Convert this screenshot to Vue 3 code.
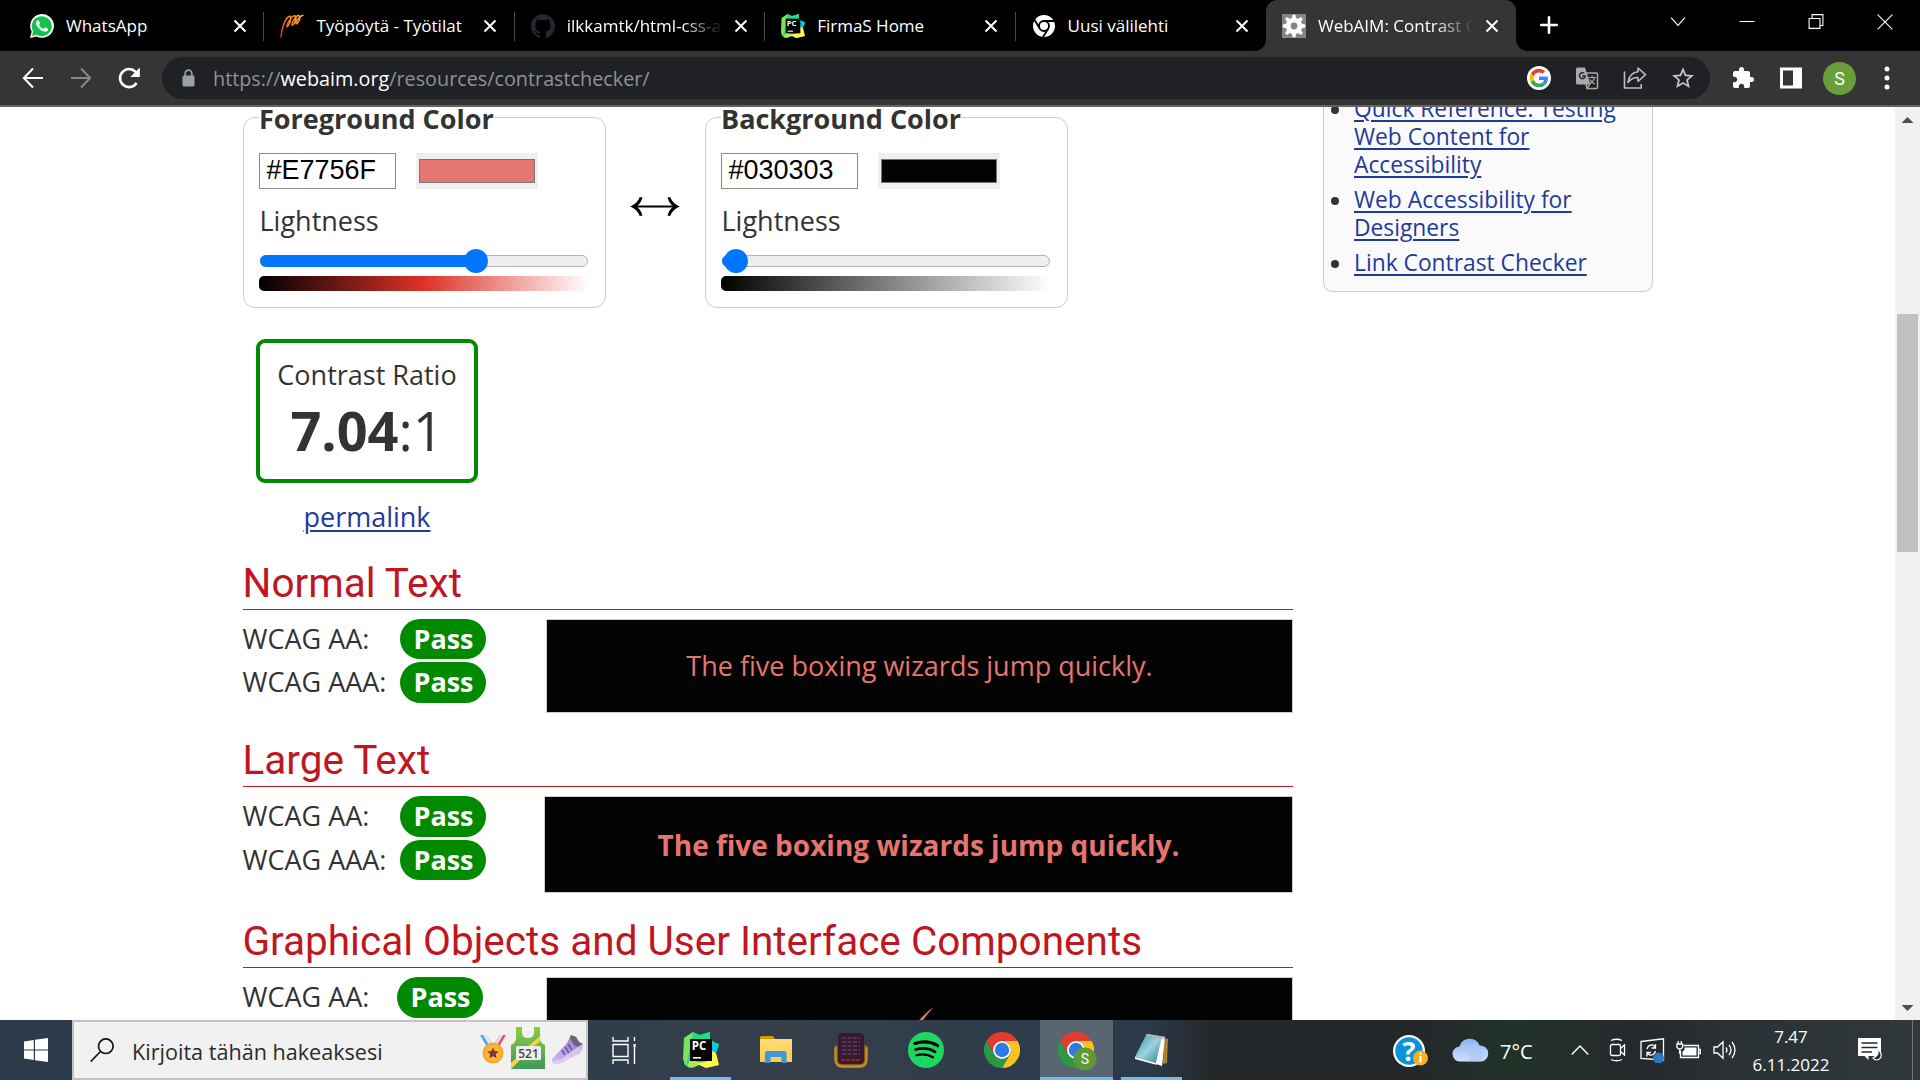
<script setup>
const tabs = [
  { icon: 'whatsapp', title: 'WhatsApp' },
  { icon: 'swirl', title: 'Työpöytä - Työtilat' },
  { icon: 'github', title: 'ilkkamtk/html-css-a', fade: true },
  { icon: 'pc', title: 'FirmaS Home' },
  { icon: 'mono', title: 'Uusi välilehti' },
  { icon: 'gear', title: 'WebAIM: Contrast C', active: true, fade: true },
]
const panels = [
  { name: 'Foreground Color', hex: '#E7756F', color: '#e7756f', pos: 216, mid: '#de3228' },
  { name: 'Background Color', hex: '#030303', color: '#030303', pos: 14, mid: '#808080' },
]
const links = ['Quick Reference: Testing Web Content for Accessibility', 'Web Accessibility for Designers', 'Link Contrast Checker']
</script>

<template>
  <div class="screen">
    <svg class="defs" width="0" height="0">
      <defs>
        <linearGradient id="cloudg" x1="0" y1="0" x2="0" y2="1"><stop offset="0" stop-color="#8fb4f2" /><stop offset="1" stop-color="#cfdffb" /></linearGradient>
        <linearGradient id="noteg" x1="0" y1="0" x2="1" y2="1"><stop offset="0" stop-color="#2f8ea6" /><stop offset=".5" stop-color="#9fd3df" /><stop offset="1" stop-color="#2c7f98" /></linearGradient>
        <linearGradient id="swirlg" x1="0" y1="1" x2="1" y2="0"><stop offset="0" stop-color="#e5322d" /><stop offset=".5" stop-color="#f07a24" /><stop offset="1" stop-color="#f9b233" /></linearGradient>
        <linearGradient id="foldg" x1="0" y1="0" x2="0" y2="1"><stop offset="0" stop-color="#ffdc79" /><stop offset="1" stop-color="#fbcb50" /></linearGradient>
        <linearGradient id="shirtg" x1="0" y1="0" x2="0" y2="1"><stop offset="0" stop-color="#8ccb45" /><stop offset="1" stop-color="#3f9a5c" /></linearGradient>
        <linearGradient id="shoeg" x1="1" y1="0" x2="0" y2="1"><stop offset="0" stop-color="#8f74c9" /><stop offset="1" stop-color="#d3bdf0" /></linearGradient>
        <symbol id="pc" viewBox="0 0 36 36">
          <path d="M1 6 10 0l7 3 10-3v7l4 3 5 2-4 9 3 12-12 3-8-4-9 4-5-4z" fill="#21d789" />
          <path d="M1 6 10 0 7 16 3 34 0 27z" fill="#7be35a" /><path d="M7 28 4 34 9 36l12-5z" fill="#a8ea55" />
          <path d="M28 10l8 4-3 7-4 3z" fill="#07c3f2" /><path d="M29 19l4 2 3 12-13 3-9-4 14-4z" fill="#fcf84a" />
          <path d="M17 3 27 0v7l-13 1z" fill="#19e08f" />
          <rect x="7" y="7" width="22" height="22" fill="#000" /><rect x="10" y="25" width="8" height="1.6" fill="#fff" />
          <text x="8.7" y="17.5" font-family="Open Sans, sans-serif" font-weight="700" font-size="11.5" fill="#fff">PC</text>
        </symbol>
        <symbol id="chrome" viewBox="0 0 48 48">
          <path d="M24 12h20.8A24 24 0 0 0 3.2 12l10.4 18A12 12 0 0 1 24 12z" fill="#e33b2e" />
          <path d="M44.8 12H24a12 12 0 0 1 10.4 18L24 48A24 24 0 0 0 44.8 12z" fill="#fcc31e" />
          <path d="M34.4 30a12 12 0 0 1-20.8 0L3.2 12A24 24 0 0 0 24 48z" fill="#2b9846" />
          <circle cx="24" cy="24" r="12" fill="#fff" /><circle cx="24" cy="24" r="9.6" fill="#3079ea" />
        </symbol>
      </defs>
    </svg>

    <header class="tabs">
      <div v-for="t in tabs" :key="t.title" class="tab" :class="{ active: t.active }">
        <svg v-if="t.icon === 'whatsapp'" class="fav" viewBox="0 0 24 24">
          <path d="M0 24 1.7 17.8A11.9 11.9 0 1 1 6.4 22.4z" fill="#fff" />
          <path d="M1.9 22.1 3.2 17.4A10 10 0 1 1 6.7 20.85z" fill="#12c24c" />
          <path fill="#fff" d="M17.472 14.382c-.297-.149-1.758-.867-2.03-.967-.273-.099-.471-.148-.67.15-.197.297-.767.966-.94 1.164-.173.199-.347.223-.644.075-.297-.15-1.255-.463-2.390-1.475-.883-.788-1.480-1.761-1.653-2.059-.173-.297-.018-.458.130-.606.134-.133.298-.347.446-.520.149-.174.198-.298.298-.497.099-.198.050-.371-.025-.520-.075-.149-.669-1.612-.916-2.207-.242-.579-.487-.500-.669-.510-.173-.008-.371-.010-.570-.010-.198 0-.520.074-.792.372-.272.297-1.040 1.016-1.040 2.479 0 1.462 1.065 2.875 1.213 3.074.149.198 2.096 3.200 5.077 4.487.709.306 1.262.489 1.694.625.712.227 1.360.195 1.871.118.571-.085 1.758-.719 2.006-1.413.248-.694.248-1.289.173-1.413-.074-.124-.272-.198-.570-.347z" />
        </svg>
        <svg v-else-if="t.icon === 'swirl'" class="fav" viewBox="0 0 24 24" fill="none" stroke="url(#swirlg)" stroke-width="1.5" stroke-linecap="round" stroke-linejoin="round">
          <path d="M1 23C1.500 15 5 4 9.500 2.300c3-.8.500 9-2.500 10.500C6 12 11 2 14.500 1.800c3.500 0 0 9-2.300 9.400C11 10 16 1.500 18.500 1.600c3.500.4-.2 8-2.300 8.200C15 9 19 2 23 1.200" />
        </svg>
        <svg v-else-if="t.icon === 'github'" class="fav" viewBox="0 0 24 24">
          <path fill="#24292f" d="M12 .297c-6.630 0-12 5.373-12 12 0 5.303 3.438 9.800 8.205 11.385.6.113.820-.258.820-.577 0-.285-.010-1.040-.015-2.040-3.338.724-4.042-1.610-4.042-1.610C4.422 18.070 3.633 17.700 3.633 17.700c-1.087-.744.084-.729.084-.729 1.205.084 1.838 1.236 1.838 1.236 1.070 1.835 2.809 1.305 3.495.998.108-.776.417-1.305.760-1.605-2.665-.300-5.466-1.332-5.466-5.930 0-1.310.465-2.380 1.235-3.220-.135-.303-.540-1.523.105-3.176 0 0 1.005-.322 3.300 1.230.960-.267 1.980-.399 3-.405 1.020.006 2.040.138 3 .405 2.280-1.552 3.285-1.230 3.285-1.230.645 1.653.240 2.873.120 3.176.765.840 1.230 1.910 1.230 3.220 0 4.610-2.805 5.625-5.475 5.920.420.360.810 1.096.810 2.220 0 1.606-.015 2.896-.015 3.286 0 .315.210.690.825.570C20.565 22.092 24 17.592 24 12.297c0-6.627-5.373-12-12-12" />
        </svg>
        <svg v-else-if="t.icon === 'pc'" class="fav"><use href="#pc" /></svg>
        <svg v-else-if="t.icon === 'mono'" class="fav" viewBox="0 0 24 24">
          <circle cx="12" cy="12" r="11" fill="#fff" /><circle cx="12" cy="12" r="5" fill="none" stroke="#000" stroke-width="1.8" />
          <path d="M12 7h10.500M7.700 14.500 2.300 5.500M16.300 14.500 11 23" stroke="#000" stroke-width="1.8" />
        </svg>
        <svg v-else class="fav" viewBox="0 0 24 24">
          <rect width="24" height="24" fill="#858585" />
          <g fill="#fff"><circle cx="12" cy="12" r="8.3" />
            <path v-for="a in 8" :key="a" d="M9.800 5 10.600.8h2.800L14.200 5z" :transform="`rotate(${a * 45} 12 12)`" /></g>
          <circle cx="12" cy="12" r="3.4" fill="#858585" />
        </svg>
        <span class="title" :class="{ fade: t.fade }">{{ t.title }}</span>
        <svg class="x" viewBox="0 0 14 14" stroke="#fff" stroke-width="2"><path d="M1.500 1.500l11 11M12.500 1.500l-11 11" /></svg>
      </div>
      <svg class="plus" viewBox="0 0 18 18" stroke="#fff" stroke-width="2.6" stroke-linecap="round"><path d="M9 1.300v15.400M1.300 9h15.400" /></svg>
      <div class="winctl">
        <svg viewBox="0 0 70 44"><path d="M27.500 17.500l7 8 7-8" /></svg>
        <svg viewBox="0 0 70 44"><path d="M27 21.500h15" /></svg>
        <svg viewBox="0 0 70 44"><path d="M27.500 18.500h11v10h-11zM30.500 18v-3.500h11v11h-3" /></svg>
        <svg viewBox="0 0 70 44"><path d="M27 14.500l15 15M42 14.500l-15 15" /></svg>
      </div>
    </header>

    <div class="toolbar">
      <svg class="t24" viewBox="0 0 24 24" stroke="#fff" stroke-width="2" fill="none"><path d="M22 12H3.500M12 2.500 2.800 12l9.200 9.500" /></svg>
      <svg class="t24" viewBox="0 0 24 24" stroke="#888" stroke-width="2" fill="none"><path d="M2 12h18.500M12 2.500l9.200 9.500-9.200 9.500" /></svg>
      <svg class="t24" viewBox="0 0 24 24"><path d="M19.600 17a9 9 0 1 1 .2-9.500" stroke="#fff" stroke-width="2.6" fill="none" /><path d="M22.800 1.500V11h-9.500z" fill="#fff" /></svg>
      <div class="omni">
        <svg class="lock" viewBox="0 0 14 18"><rect x="1" y="6.500" width="12" height="11" rx="1.5" fill="#9aa0a6" /><path d="M3.700 7V4.500a3.300 3.300 0 0 1 6.600 0V7" stroke="#9aa0a6" stroke-width="1.7" fill="none" /></svg>
        <span class="url">https://<b>webaim.org</b>/resources/contrastchecker/</span>
        <svg class="o24" viewBox="0 0 24 24"><circle cx="12" cy="12" r="12" fill="#fff" />
          <g transform="translate(2.700 2.700) scale(.387)"><path fill="#EA4335" d="M24 9.500c3.540 0 6.710 1.220 9.210 3.600l6.850-6.850C35.900 2.380 30.470 0 24 0 14.620 0 6.510 5.380 2.560 13.220l7.980 6.190C12.430 13.720 17.740 9.500 24 9.500z" /><path fill="#4285F4" d="M46.980 24.550c0-1.570-.150-3.090-.380-4.550H24v9.020h12.940c-.580 2.960-2.260 5.480-4.780 7.180l7.730 6c4.510-4.180 7.090-10.360 7.090-17.650z" /><path fill="#FBBC05" d="M10.530 28.590c-.480-1.450-.760-2.990-.760-4.590s.270-3.140.760-4.590l-7.980-6.190C.920 16.460 0 20.120 0 24c0 3.880.920 7.540 2.560 10.780l7.970-6.190z" /><path fill="#34A853" d="M24 48c6.480 0 11.930-2.130 15.890-5.810l-7.730-6c-2.150 1.450-4.920 2.300-8.160 2.300-6.260 0-11.570-4.220-13.470-9.910l-7.980 6.190C6.510 42.620 14.620 48 24 48z" /></g>
        </svg>
        <svg class="o24" viewBox="0 0 24 24"><path d="M9 7h12q1.500 0 1.500 1.500v13q0 1-1.200 1H12z" fill="none" stroke="#aaa" stroke-width="1.5" /><path d="M2.500 1.500h7.500l5.500 17H2.500q-1.500 0-1.500-1.500V3q0-1.500 1.500-1.500z" fill="#aaa" /><path d="M10.500 10H7.300M10.400 10A3 3 0 1 1 9.300 7.300" stroke="#202124" stroke-width="1.4" fill="none" /><path d="M13.500 11.500h7.500M17.200 9.800v1.700M19.500 11.500c-.5 2.500-2.500 5-4.500 6.200M15 13.500c1 2 3 3.800 5 4.500M12 22l3-3.500" stroke="#aaa" stroke-width="1.2" fill="none" /></svg>
        <svg class="o24" viewBox="0 0 24 24" fill="none" stroke="#bbb" stroke-width="1.6"><path d="M1.500 5.500V22h16.700v-4" /><path d="M15 2l7.500 6.700L15 15.500v-4c-4.500 0-7.500 1.500-10 5C5.800 10.500 9 6.500 15 5.800z" stroke-linejoin="round" /></svg>
        <svg class="o24" viewBox="0 0 24 24"><path fill="#c4c4c4" transform="translate(-1.200 -1) scale(1.100)" d="M22 9.240l-7.190-.62L12 2 9.190 8.630 2 9.240l5.460 4.730L5.820 21 12 17.270 18.180 21l-1.630-7.030L22 9.240zM12 15.400l-3.760 2.270 1-4.280-3.320-2.880 4.380-.38L12 6.100l1.710 4.040 4.380.38-3.320 2.880 1 4.280L12 15.400z" /></svg>
      </div>
      <svg class="t24" viewBox="0 0 24 24"><path fill="#fff" d="M20.500 11H19V7c0-1.100-.9-2-2-2h-4V3.500a2.500 2.500 0 0 0-5 0V5H4c-1.100 0-1.990.9-1.990 2v3.800H3.500c1.490 0 2.700 1.210 2.700 2.700s-1.210 2.700-2.700 2.700H2V20c0 1.100.9 2 2 2h3.800v-1.500c0-1.490 1.210-2.700 2.700-2.700s2.700 1.210 2.700 2.700V22H17c1.100 0 2-.9 2-2v-4h1.500a2.500 2.500 0 0 0 0-5z" /></svg>
      <svg class="t24" viewBox="0 0 24 24"><path fill="#fff" fill-rule="evenodd" d="M1 1.500h22v21H1zM4 4.500v15h10v-15z" /></svg>
      <div class="avatar">S</div>
      <svg class="t24" viewBox="0 0 24 24" fill="#fff"><circle cx="12" cy="3" r="2.5" /><circle cx="12" cy="12" r="2.5" /><circle cx="12" cy="21" r="2.5" /></svg>
    </div>

    <div class="page">
      <main class="main">
        <div class="pickers">
          <template v-for="(p, i) in panels" :key="p.name">
            <svg v-if="i" class="swap" viewBox="0 0 50 20"><path d="M4 9.500h42" stroke="#000" stroke-width="2" /><path d="M0 9.500C5 7.500 8.500 4 9.500.300h2.900C11.800 4 9.500 7.500 6.500 9.500c3 2 5.300 5.500 5.900 9.200H9.500C8.500 15 5 11.500 0 9.500zM50 9.500C45 7.500 41.500 4 40.500.300h-2.900c.6 3.700 2.900 7.200 5.900 9.200-3 2-5.300 5.500-5.900 9.200h2.900C41.500 15 45 11.500 50 9.500z" /></svg>
            <section class="panel">
              <h3 class="legend">{{ p.name }}</h3>
              <div class="fields">
                <div class="hex">{{ p.hex }}</div>
                <div class="well"><div class="swatch" :style="{ background: p.color }"></div></div>
              </div>
              <div class="light">Lightness</div>
              <div class="track">
                <div class="fill" :style="{ width: p.pos + 'px' }"></div>
                <div class="thumb" :style="{ left: p.pos - 13 + 'px' }"></div>
              </div>
              <div class="ramp" :style="{ background: `linear-gradient(90deg,#000,${p.mid},#fff)` }"></div>
            </section>
          </template>
        </div>
        <div class="ratio">
          <div class="rl">Contrast Ratio</div>
          <div class="rv"><b>7.04</b>:1</div>
        </div>
        <div class="perm"><a>permalink</a></div>

        <section class="sec s1">
          <h2>Normal Text</h2>
          <div class="row">
            <div class="levels">
              <div class="lv"><span>WCAG AA:</span><b>Pass</b></div>
              <div class="lv"><span>WCAG AAA:</span><b>Pass</b></div>
            </div>
            <div class="sample n">The five boxing wizards jump quickly.</div>
          </div>
        </section>
        <section class="sec s2">
          <h2>Large Text</h2>
          <div class="row">
            <div class="levels">
              <div class="lv"><span>WCAG AA:</span><b>Pass</b></div>
              <div class="lv"><span>WCAG AAA:</span><b>Pass</b></div>
            </div>
            <div class="sample l">The five boxing wizards jump quickly.</div>
          </div>
        </section>
        <section class="sec s3">
          <h2>Graphical Objects and User Interface Components</h2>
          <div class="row">
            <div class="levels"><div class="lv"><span>WCAG AA:</span><b>Pass</b></div></div>
            <div class="sample g"><svg viewBox="0 0 40 40"><path d="M21.500.5Q12 6 -2 24l4 3Q12 10 21.500.500z" fill="#e7756f" /></svg></div>
          </div>
        </section>
      </main>
      <aside class="side">
        <ul><li v-for="l in links" :key="l"><a>{{ l }}</a></li></ul>
      </aside>
      <div class="scroll">
        <svg viewBox="0 0 25 25"><path d="M6.500 16 12.500 10l6 6z" fill="#505050" /></svg>
        <div class="grip"></div>
        <svg viewBox="0 0 25 25"><path d="M6.500 10l6 6 6-6z" fill="#505050" /></svg>
      </div>
    </div>

    <footer class="task">
      <div class="start"><svg viewBox="0 0 24 24" fill="#fff"><path d="M0 3.400 9.800 2v9.500H0zM11 1.800 24 0v11.500H11zM0 12.500h9.800V22L0 20.600zM11 12.500h13V24l-13-1.800z" /></svg></div>
      <div class="search">
        <svg class="mag" viewBox="0 0 24 24" fill="none" stroke="#111" stroke-width="1.7"><circle cx="15.800" cy="8.200" r="7.300" /><path d="M10.500 13.500.7 23.500" /></svg>
        <span class="ph">Kirjoita tähän hakeaksesi</span>
        <svg class="doodle" viewBox="0 0 104 44">
          <path d="M0 0h6l7 11-4 4z" fill="#4aa3e8" /><path d="M3 0h3l6 10-2 2z" fill="#dceafc" /><path d="M26 0h-6l-7 11 4 4z" fill="#e44a7b" /><path d="M23 0h-3l-6 10 2 2z" fill="#fbdbe6" />
          <g transform="translate(0 0)"><circle cx="13" cy="18" r="10.500" fill="#f9a825" /><circle cx="13" cy="18" r="8" fill="#fbb63f" /><path d="M13 12.500l1.700 3.600 4 .5-2.900 2.700.8 3.900-3.600-1.900-3.600 1.900.8-3.900-2.900-2.700 4-.5z" fill="#7a3b2e" /></g>
          <g transform="translate(31 -8)"><path d="M5 0h6v5q0 6 6 6t6-6V0h6v11q0 5 5 7v24H0V18q5-2 5-7z" fill="url(#shirtg)" /><path d="M29 9v6l-11 7h-4zM9 33 0 42v-6l4-4z" fill="#f5d63a" /><rect x="5" y="19" width="25" height="14" rx="1.5" fill="#eee" /><text x="17.500" y="30.500" font-family="Open Sans, sans-serif" font-size="12" font-weight="600" fill="#444" text-anchor="middle">521</text></g>
          <path d="M72 24 87 8l4-8 5 2 3 5 4 2q0 5-3 9L83 27q-5 3-10 2z" fill="url(#shoeg)" />
          <path d="M91 0l5 2 3 5 4 2-3 4-6-3-4-7z" fill="#6a6378" />
          <path d="M74 26l7-2L102 9l1 1q0 5-3 9L83 27q-5 3-10 2z" fill="#e3d6f7" opacity=".75" />
          <path d="M88 9l4 6M85 12l4 6M82 15l3 5" stroke="#6f55a5" stroke-width="1.6" />
        </svg>
      </div>
      <div class="apps">
        <div class="app tv"><svg width="24" height="29" viewBox="0 0 24 29" fill="none" stroke="#fff" stroke-width="1.4"><path d="M1 1v4h15V1M1 28v-4h15v4M1 8.500h15v12H1zM22.500 1v4M22.500 11v17" /><rect x="21.500" y="8" width="2.2" height="3" fill="#fff" stroke="none" /></svg></div>
        <div class="app run"><svg width="36" height="36"><use href="#pc" /></svg></div>
        <div class="app"><svg width="32" height="28" viewBox="0 0 32 28"><path d="M0 1.500Q0 0 1.500 0H13l2 3v3H0z" fill="#d99a00" /><rect y="3" width="32" height="23" rx=".8" fill="url(#foldg)" /><path d="M5 27V17.500Q5 15 7.500 15h16.500q2.500 0 2.500 2.500V27h-5v-6H10.500v6z" fill="#3f96dc" /></svg></div>
        <div class="app"><svg width="34" height="36" viewBox="0 0 34 36"><path d="M1 13h32v15q0 8-8 8H9q-8 0-8-8z" fill="#80561f" /><path d="M1.500 15v12q0 7.500 8 7.500h15q8 0 8-7.500V15" fill="none" stroke="#c88d22" stroke-width="2.5" /><rect x="4" y="1" width="26" height="31" rx="4" fill="#36182f" /><path d="M8 6h18M8 10h18M8 14h18M8 18h18M8 22h18" stroke="#5c4068" stroke-width="1.5" stroke-dasharray="4 1.500" /><path d="M7 28h19" stroke="#8e2229" stroke-width="2" stroke-dasharray="4 1" /></svg></div>
        <div class="app"><svg width="36" height="36" viewBox="0 0 24 24"><circle cx="12" cy="12" r="12" fill="#1ed760" /><path fill="none" stroke="#000" stroke-linecap="round" stroke-width="2.1" d="M4.600 7.600c5-1.500 11-1 15.200 1.500" /><path fill="none" stroke="#000" stroke-linecap="round" stroke-width="1.8" d="M5.100 11.700c4.500-1.300 9.300-.8 13 1.500" /><path fill="none" stroke="#000" stroke-linecap="round" stroke-width="1.5" d="M5.700 15.500c3.800-1 7.700-.6 11 1.300" /></svg></div>
        <div class="app"><svg width="36" height="36"><use href="#chrome" /></svg></div>
        <div class="app on"><svg width="40" height="40" viewBox="0 0 40 40"><use href="#chrome" x="1" y="2" width="36" height="36" /><circle cx="28" cy="29" r="11.5" fill="#5d9a33" /><text x="28" y="34" text-anchor="middle" font-family="Roboto, sans-serif" font-size="14" fill="#fff">S</text></svg></div>
        <div class="app run"><svg width="34" height="34" viewBox="0 0 34 34"><path d="M29 5l4 1-1 24-4 1z" fill="#b0812d" /><path d="M12 1 30 4 27 33 21 31z" fill="#e6eef1" /><path d="M11 2 27 4 21 30 0 24z" fill="url(#noteg)" /><path d="M0 24 21 30l1 2L0 26zM21 30 27 4l2 .5L27 33z" fill="#fff" /><path d="M11 2.500 30 5" stroke="#aaa" stroke-width="3" stroke-dasharray="1.500 1" /></svg></div>
      </div>
      <div class="tray">
        <svg class="help" viewBox="0 0 36 34"><circle cx="16" cy="16" r="16" fill="#fff" /><circle cx="16" cy="16" r="13.700" fill="#0a93d8" /><text x="16" y="26" text-anchor="middle" font-family="Open Sans, sans-serif" font-weight="700" font-size="27" fill="#fff">?</text><circle cx="27.500" cy="23" r="7.500" fill="#f5b01e" /><path d="M27.500 21v6.500M27.500 17.800v2" stroke="#fff" stroke-width="2" /></svg>
        <svg class="cloud" viewBox="0 0 36 24"><path d="M8 23.500a7.500 7.500 0 0 1-1-15A10.500 10.500 0 0 1 27 7.500a8 8 0 0 1 1.500 16z" fill="url(#cloudg)" /><path d="M14 12q5-5 11-1a8 8 0 0 1 3.500 12.500H12Q22 20 14 12z" fill="#a9c4f5" opacity=".6" /></svg>
        <span class="deg">7°C</span>
        <svg class="chev" viewBox="0 0 18 12" fill="none" stroke="#fff" stroke-width="1.5"><path d="M.7 10.500 9 2l8.300 8.500" /></svg>
        <svg class="cam" viewBox="0 0 17 24" fill="none" stroke="#fff" stroke-width="1.3"><rect x="1.500" y="6.500" width="10" height="11" rx="1.5" /><path d="M11.500 10.500 15.500 7v10l-4-3.500M2 2.500q5.500-2.500 11 0M2 21.500q5.500 2.500 11 0" /></svg>
        <svg class="sync" viewBox="0 0 25 25" fill="none" stroke="#fff" stroke-width="1.3"><path d="M1 3.500 23.500.8V22L1 20.500z" /><path d="M7 11q1.500-4.500 6-4l2.500 2.500M15.500 6v4h-4M15.500 13q-1.500 4.500-6 4L7 14.500M7 18.500v-4h4" /><circle cx="18.500" cy="20" r="5.500" fill="#2d78c4" stroke="none" /></svg>
        <svg class="bat" viewBox="0 0 25 18" fill="none" stroke="#fff" stroke-width="1.3"><path d="M7.500 4.500h15v12H4.500V9.500M23 8.500h1.300v4H23M1 3h5.500v3.500q-2.700 3-5.500 0zM2.200 0v3M5.300 0v3M3.700 8v5" /><path d="M8.500 6.500h12v8h-14v-4q2.500-1 2-4z" fill="#fff" stroke="none" /></svg>
        <svg class="vol" viewBox="0 0 24 20" fill="none" stroke="#fff" stroke-width="1.3"><path d="M1 7h3.500L10 1.800v16.400L4.500 13H1zM13 7.500q1.800 2.500 0 5M16 4.800q4 5.200 0 10.400M19 2q6 8 0 16" /></svg>
        <div class="clock"><span>7.47</span><span>6.11.2022</span></div>
        <svg class="note" viewBox="0 0 26 26"><path d="M1 1h23v18H11.500v4L7.500 19H1z" fill="#fff" /><path d="M4.500 6h16M4.500 10.500h16M4.500 15H15" stroke="#25292c" stroke-width="1.3" /><path d="M20 12.500q3.500 5-4 8.500 2 3 5.500 1.500 3.500-2 2.500-6-.9-3-4-4z" fill="#25292c" stroke="#fff" stroke-width="1.2" /></svg>
        <div class="peek"></div>
      </div>
    </footer>
  </div>
</template>

<style>
html, body { margin: 0; background: #fff; overflow: hidden; }
</style>
<style scoped>
.screen { width: 1920px; height: 1080px; display: flex; flex-direction: column; overflow: hidden; font-family: "Open Sans", sans-serif; color: #333; background: #fff; }
.screen * { box-sizing: border-box; }
.defs { position: absolute; }
svg { display: block; flex: none; }
h2, h3, ul { margin: 0; padding: 0; }
.tabs { height: 51px; flex: none; background: #000; display: flex; padding-left: 14px; }
.tab { width: 250.400px; height: 51px; flex: none; display: flex; align-items: center; padding: 1px 17px 0 16px; position: relative; }
.tab:nth-child(-n+4)::after { content: ""; position: absolute; right: 0; top: 12px; width: 1px; height: 29px; background: #4a4a4a; }
.tab.active { background: #353535; border-radius: 11px 11px 0 0; }
.tab.active::before, .tab.active::after { content: ""; position: absolute; bottom: 0; width: 11px; height: 11px; background: radial-gradient(circle at 0 0, transparent 10.500px, #353535 11px); }
.tab.active::before { left: -11px; }
.tab.active::after { right: -11px; background: radial-gradient(circle at 100% 0, transparent 10.500px, #353535 11px); }
.fav { width: 24px; height: 24px; }
.title { margin-left: 12px; width: 160px; height: 26px; line-height: 25px; font-size: 17px; color: #fff; white-space: nowrap; flex: none; }
.title.fade { -webkit-mask-image: linear-gradient(90deg, #000 115px, transparent 156px); mask-image: linear-gradient(90deg, #000 115px, transparent 156px); }
.x { width: 14px; height: 14px; margin-left: 7px; }
.plus { width: 18px; height: 18px; margin: 16px 0 0 24px; }
.winctl { display: flex; margin-left: auto; fill: none; stroke: #fff; stroke-width: 1.100; }
.winctl svg { width: 69px; height: 44px; }
.toolbar { height: 56px; flex: none; background: #353535; border-bottom: 2px solid #636363; display: flex; align-items: center; padding-left: 21px; }
.t24 { width: 24px; height: 24px; margin-right: 24px; }
.omni { width: 1548px; height: 42px; border-radius: 21px; background: #202124; margin: 0 21px 0 -3px; display: flex; align-items: center; flex: none; padding-left: 19px; }
.lock { width: 15px; height: 18px; }
.url { margin-left: 17px; width: 1314px; flex: none; font-size: 19.800px; line-height: 30px; padding-top: 1px; color: #8f9296; white-space: nowrap; }
.url b { font-weight: 400; color: #fff; }
.o24 { width: 24px; height: 24px; margin-right: 24px; }
.avatar { width: 33px; height: 33px; border-radius: 50%; background: #689f38; color: #fff; font: 18px/33px Roboto, sans-serif; text-align: center; margin: 0 19px 0 -4px; flex: none; }
.page { height: 913px; flex: none; display: flex; overflow: hidden; padding-left: 243px; }
.main { width: 1050px; height: 913px; flex: none; font-size: 27px; line-height: 37px; }
.pickers { display: flex; padding-top: 10px; }
.panel { width: 363px; height: 191px; flex: none; border: 1px solid #ccc; border-radius: 12px; padding: 0 15px; }
.legend { width: max-content; margin-top: -18px; background: #fff; font-size: 27px; line-height: 37px; font-weight: 700; }
.fields { display: flex; gap: 20px; margin-top: 16px; }
.hex { width: 137px; height: 36px; border: 1px solid #8b8b8b; padding-left: 6.500px; font: 27px/33px "Liberation Sans", Arial, sans-serif; color: #000; }
.well { width: 122px; height: 36px; background: #efefef; padding: 6px 3px; }
.swatch { width: 116px; height: 24px; border: 1px solid #777; }
.light { margin: 13px 0 0 .500px; }
.track { position: relative; width: 328px; height: 12px; margin: 16px 0 0 1px; border: 1px solid #b2b2b2; border-radius: 6px; background: #efefef; }
.fill { height: 12px; margin: -1px 0 0 -1px; background: #0075ff; border-radius: 6px; }
.thumb { position: absolute; top: -7px; width: 24px; height: 24px; border-radius: 50%; background: #0075ff; }
.ramp { width: 330px; height: 15px; margin-top: 9px; border-radius: 5px; }
.swap { width: 50px; height: 20px; margin: 80px 25px 0 24px; }
.ratio { width: 222px; height: 144px; margin: 31px 0 0 13px; border: 4px solid #008a00; border-radius: 9px; padding-top: 13px; text-align: center; }
.rv { font-size: 54px; line-height: 74px; }
.rv b { font-weight: 700; }
.perm { width: 222px; margin: 15px 0 0 13px; text-align: center; }
a { color: #1e3b9c; text-decoration: underline; text-decoration-thickness: 2px; text-underline-offset: 3px; }
.s1 { margin-top: 24px; height: 177px; }
.s2 { height: 181px; }
h2 { font: 400 40.500px/48px Roboto, sans-serif; color: #bf1722; height: 51px; border-bottom: 1px solid #bf1722; white-space: nowrap; text-indent: -.500px; }
.row { display: flex; justify-content: space-between; margin-top: 9px; }
.lv { display: flex; width: 243px; height: 43px; align-items: flex-start; }
.s2 .lv { height: 44px; }
.lv span { width: 157px; line-height: 39px; white-space: nowrap; text-indent: -.500px; }
.s3 .lv span { width: 154px; }
.lv b { width: 86px; height: 41px; border-radius: 20.500px; background: #008a00; color: #fff; line-height: 39px; text-align: center; font-weight: 700; padding-left: 1px; }
.s1 .lv:first-child b, .s2 .lv:last-child b { height: 40px; }
.sample { border: 1px solid #ccc; background: #030303; color: #e7756f; text-align: center; }
.n { width: 747px; height: 94px; line-height: 92px; }
.l { width: 749px; height: 97px; line-height: 96px; font-size: 28px; font-weight: 700; }
.g { width: 747px; height: 94px; padding: 29px 0 0 365px; }
.g svg { width: 40px; height: 40px; }
.side { width: 330px; height: 185px; margin-left: 30px; background: #fafafa; border: 1px solid #ccc; border-top: 0; border-radius: 0 0 9px 9px; font-size: 22.800px; line-height: 28px; flex: none; }
ul { list-style: none; margin-top: -12px; padding: 0 20px 0 30px; }
li { margin-bottom: 7px; position: relative; }
li::before { content: ""; position: absolute; left: -23px; top: 11px; width: 8px; height: 8px; border-radius: 50%; background: #333; }
.scroll { width: 25px; height: 913px; margin-left: auto; background: #f1f1f1; display: flex; flex-direction: column; justify-content: space-between; }
.scroll svg { width: 25px; height: 25px; }
.grip { width: 21px; height: 238px; margin: 182px 2px auto; background: #c1c1c1; }
.task { height: 60px; flex: none; display: flex; background: linear-gradient(90deg, #2c3a49 0, #2e3c4a 500px, #353f4a 800px, #2d3b4b 1060px, #2c3948 1150px, #24282b 1210px, #24282b 1430px, #22322a 1510px, #25292d 1640px, #2b3236 1750px, #30383b 1920px); }
.start { width: 72px; padding: 18px 24px; }
.start svg { width: 24px; height: 24px; }
.search { width: 516px; height: 60px; flex: none; border: 2px solid #c3c3c3; background: #f1f1f1; display: flex; align-items: center; padding-left: 16px; }
.mag { width: 24px; height: 24px; margin-top: -1px; }
.ph { margin-left: 18px; width: 348px; flex: none; font-size: 21.600px; color: #2b2b2b; line-height: 30px; padding-top: 3px; white-space: nowrap; }
.doodle { width: 104px; height: 44px; overflow: visible; margin-top: 14px; flex: none; }
.apps { display: flex; width: 600px; flex: none; }
.app { width: 75.250px; height: 60px; flex: none; display: flex; align-items: center; justify-content: center; position: relative; }
.app.tv { width: 75px; padding-right: 3px; }
.run::after, .on::after { content: ""; position: absolute; bottom: 0; height: 3px; width: 61px; background: #76b9ed; }
.on { background: #596571; width: 73px; margin: 0 1px; }
.on::after { width: 73px; }
.tray { flex: 1; position: relative; display: flex; align-items: center; color: #fff; padding-left: 205px; }
.help { width: 36px; height: 34px; margin-top: 3px; }
.cloud { width: 37px; height: 24px; margin-left: 23px; }
.deg { margin-left: 11px; width: 71px; font-size: 20px; line-height: 58px; padding-top: 3px; flex: none; }
.chev { width: 18px; height: 12px; }
.cam { width: 17px; height: 24px; margin-left: 20px; }
.sync { width: 25px; height: 25px; margin-left: 14px; }
.bat { width: 25px; height: 18px; margin-left: 11px; }
.vol { width: 24px; height: 20px; margin-left: 12px; }
.clock { display: flex; flex-direction: column; width: 90px; margin-left: 9px; font-size: 17px; line-height: 28px; text-align: center; height: 58px; padding-top: 2px; }
.note { width: 26px; height: 26px; margin-left: 21px; }
.peek { margin-left: auto; width: 8px; height: 60px; border-left: 1px solid #777; }
</style>
